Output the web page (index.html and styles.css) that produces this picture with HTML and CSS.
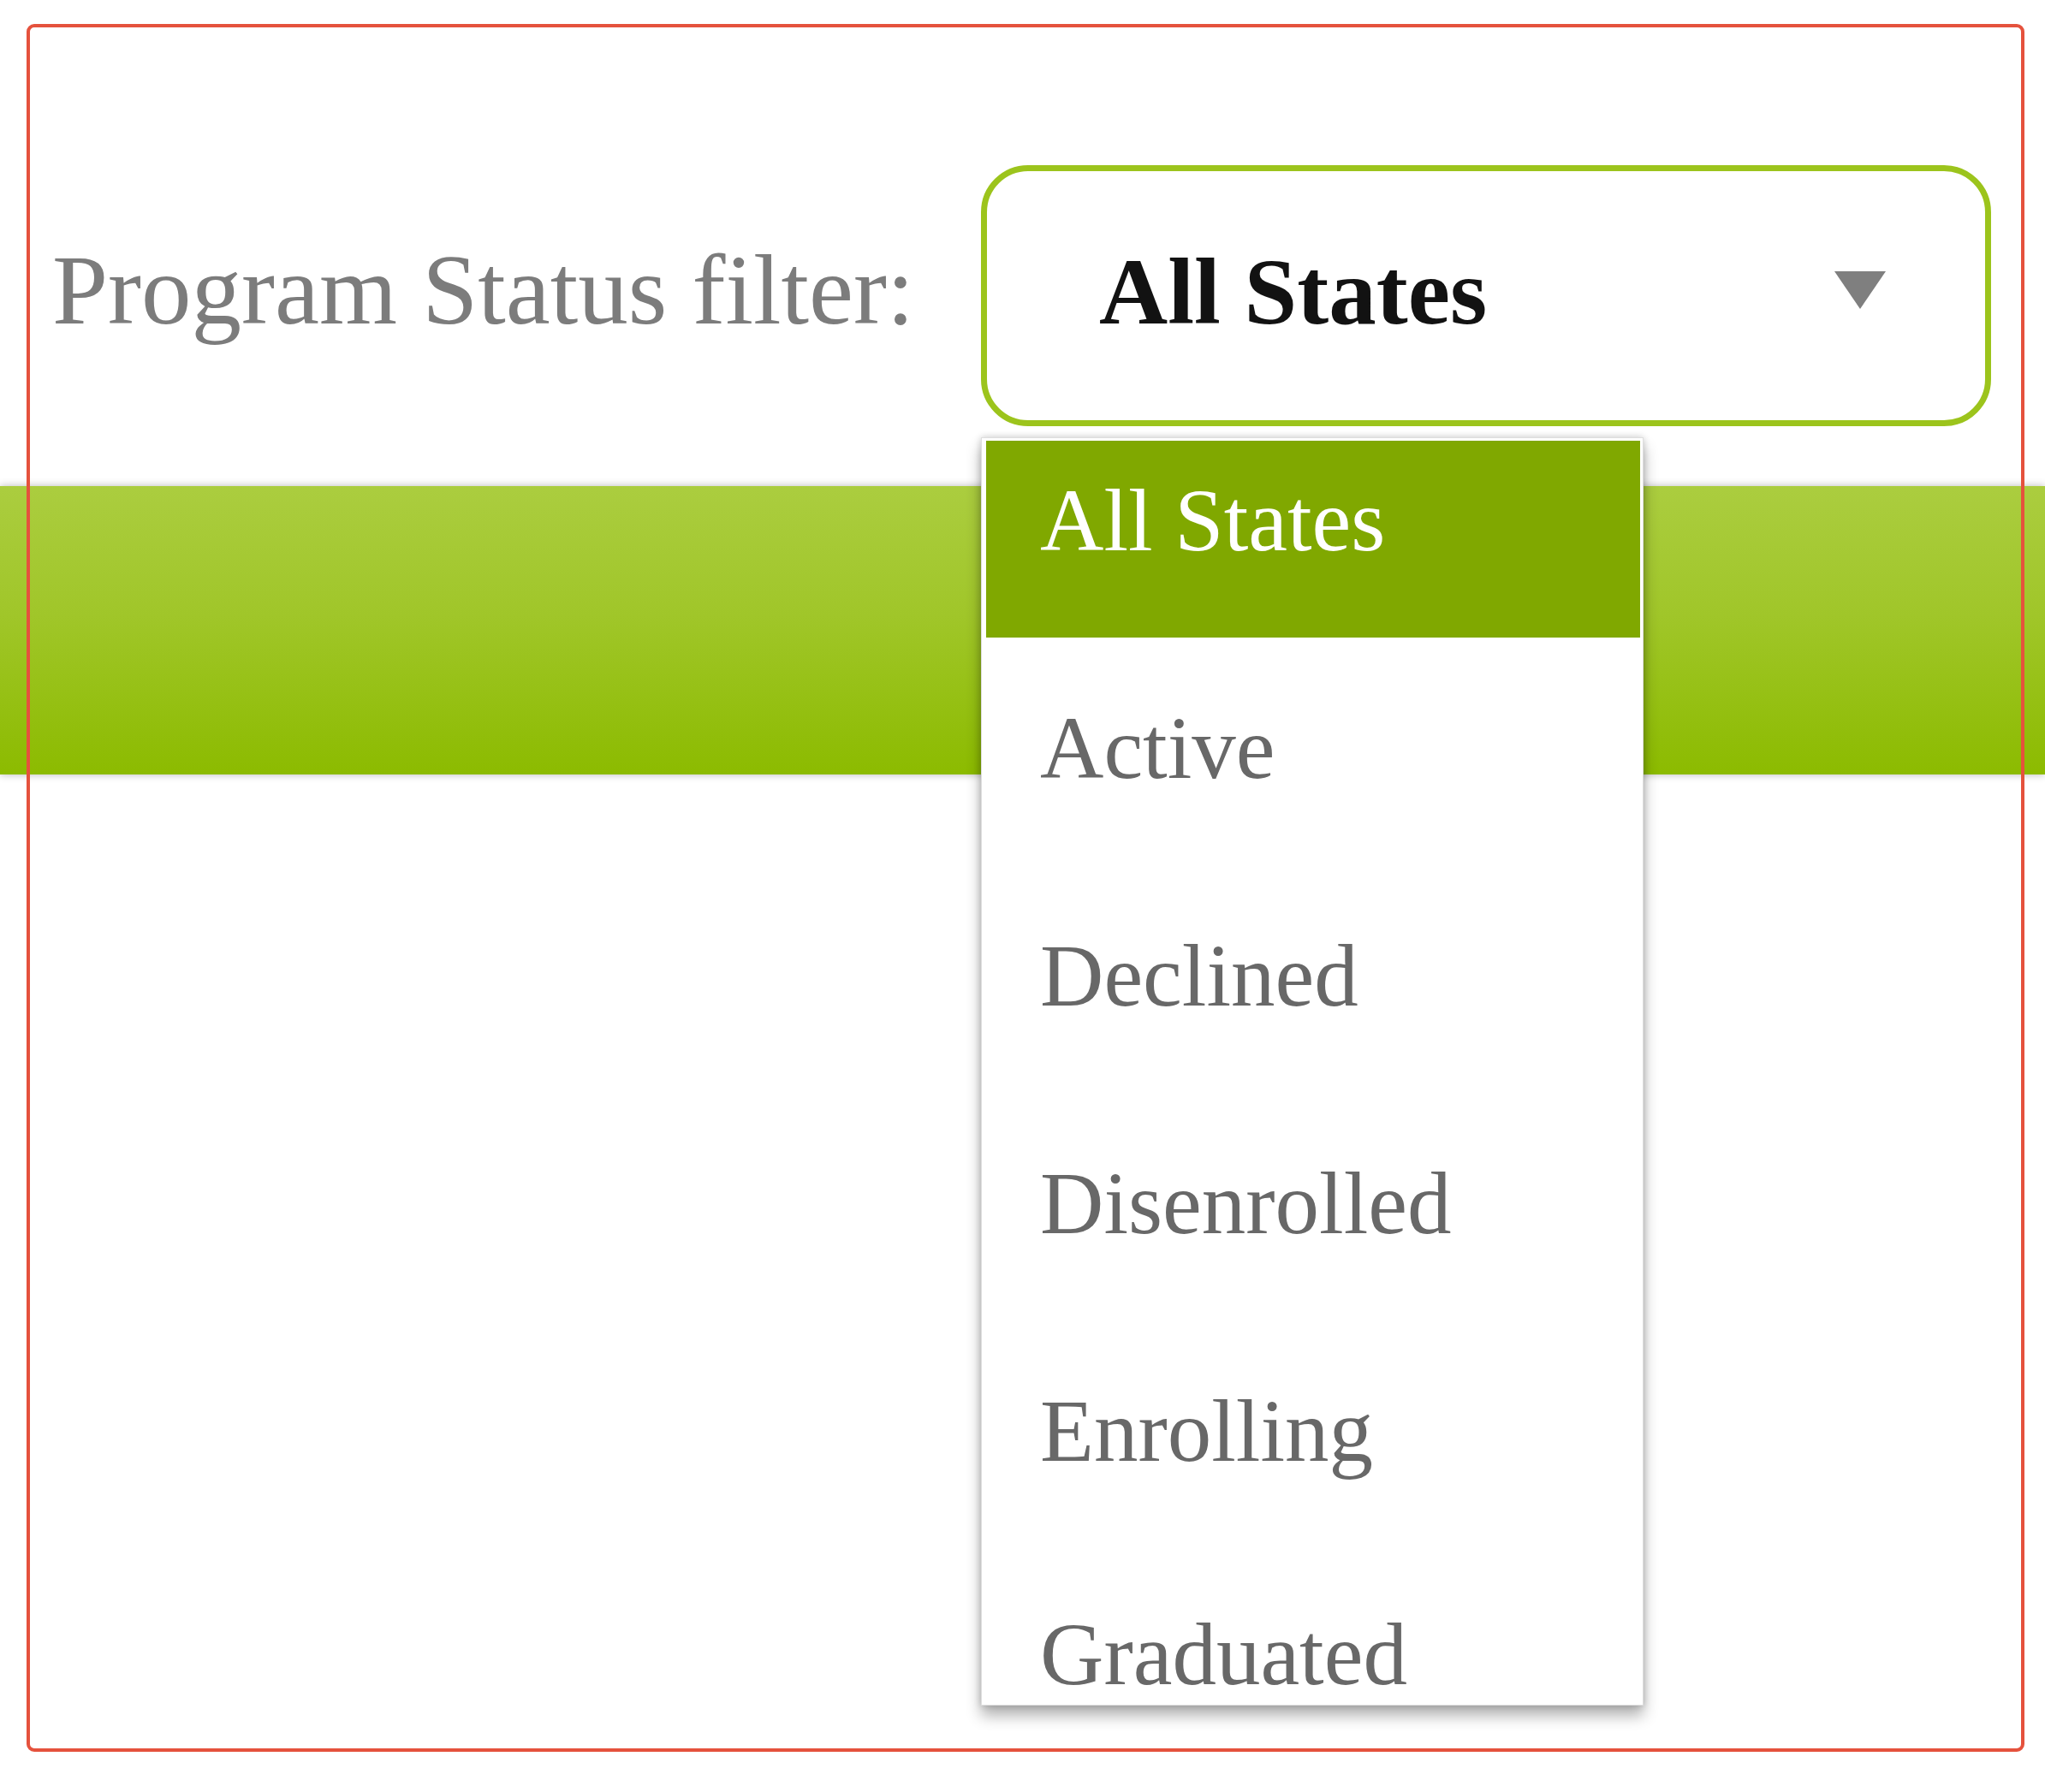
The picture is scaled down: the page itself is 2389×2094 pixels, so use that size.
FILE: index.html
```html
<!DOCTYPE html>
<html lang="en">
<head>
<meta charset="utf-8">
<title>Program Status filter</title>
<link rel="stylesheet" href="styles.css">
</head>
<body>
<div class="page">
  <div class="filter-row">
    <label class="filter-label">Program Status filter:</label>
    <div class="select">
      <span class="select-value">All States</span>
      <svg class="select-arrow" viewBox="0 0 60 44" width="60" height="44" aria-hidden="true">
        <polygon points="0,0 60,0 30,44" fill="#7f7f7f"/>
      </svg>
    </div>
  </div>
  <div class="bar"></div>
  <ul class="dropdown">
    <li class="option selected">All States</li>
    <li class="option">Active</li>
    <li class="option">Declined</li>
    <li class="option">Disenrolled</li>
    <li class="option">Enrolling</li>
    <li class="option">Graduated</li>
  </ul>
</div>
</body>
</html>
```

FILE: styles.css
```css
html, body {
  margin: 0;
  padding: 0;
  background: #ffffff;
}

.page {
  position: relative;
  min-height: 2094px;
  padding-top: 193px;
  box-sizing: border-box;
  font-family: "Liberation Serif", "Times New Roman", serif;
}

.page::after {
  content: "";
  position: absolute;
  left: 31px;
  top: 28px;
  width: 2334px;
  height: 2019px;
  box-sizing: border-box;
  border: 4px solid #e5523d;
  border-radius: 9px;
  pointer-events: none;
  z-index: 5;
}

.filter-row {
  display: flex;
  align-items: baseline;
  padding-left: 61px;
}

.filter-label {
  flex: 0 0 1085px;
  font-size: 117px;
  line-height: 1;
  color: #7c7c7c;
}

.select {
  flex: 0 0 auto;
  width: 1180px;
  height: 305px;
  box-sizing: border-box;
  border: 7px solid #9cc41c;
  border-radius: 55px;
  display: flex;
  align-items: center;
  padding-left: 131px;
  padding-right: 116px;
  background: #fff;
}

.select-value {
  flex: 1 1 auto;
  font-size: 111px;
  line-height: 1;
  font-weight: bold;
  color: #121212;
  margin-bottom: 10px;
}

.select-arrow {
  flex: 0 0 auto;
  margin-bottom: 14px;
}

.bar {
  margin-top: 70px;
  height: 337px;
  background: linear-gradient(to bottom, #abcd3f 0%, #a0c629 45%, #8cbb00 100%);
  box-shadow: 0 0 9px rgba(0, 0, 0, 0.28);
}

.dropdown {
  position: absolute;
  left: 1146px;
  top: 511px;
  width: 774px;
  height: 1482px;
  box-sizing: border-box;
  margin: 0;
  padding: 3px 3px 0 5px;
  list-style: none;
  overflow: hidden;
  background: #fff;
  border: 1px solid #dedede;
  box-shadow: 0 12px 16px rgba(0, 0, 0, 0.3), 0 0 8px rgba(0, 0, 0, 0.2);
  display: flex;
  flex-direction: column;
  gap: 36px;
  z-index: 3;
}

.option {
  flex: 0 0 230px;
  box-sizing: border-box;
  padding: 53px 0 0 63px;
  font-size: 103px;
  line-height: 80px;
  color: #686868;
}

.option:last-child {
  flex: 0 1 230px;
  min-height: 0;
  padding-top: 48px;
}

.option.selected {
  background: #80a800;
  color: #ffffff;
}
```
